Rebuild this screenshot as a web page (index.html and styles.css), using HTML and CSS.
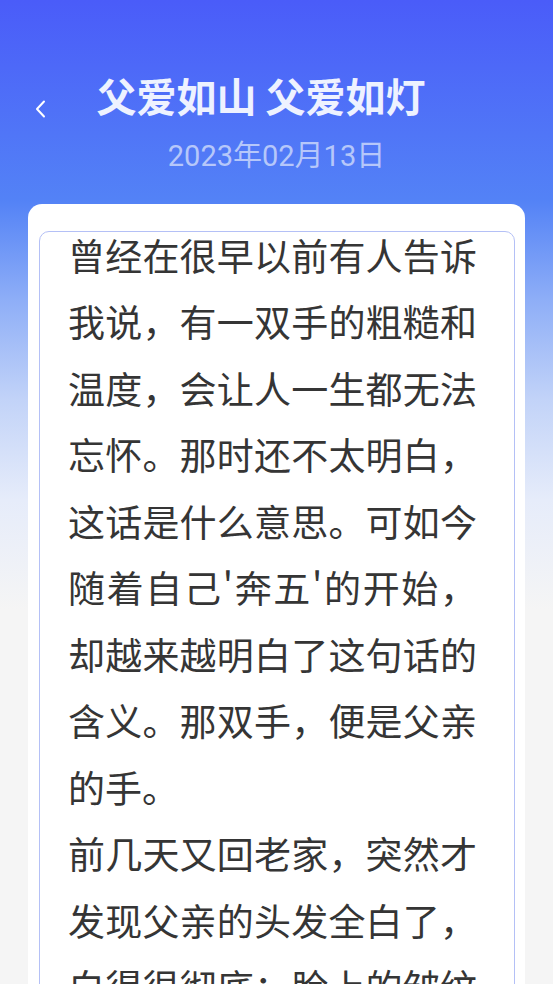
FILE: index.html
```html
<!DOCTYPE html>
<html lang="zh-CN">
<head>
<meta charset="utf-8">
<meta name="viewport" content="width=553">
<title>父爱如山 父爱如灯</title>
<link rel="stylesheet" href="styles.css">
</head>
<body>
<div class="page">
  <header class="top">
    <button class="back" aria-label="返回">
      <svg width="12" height="18" viewBox="0 0 12 18"><path d="M10 1.5 L3 9 L10 16.5" fill="none" stroke="#ffffff" stroke-width="2" stroke-linecap="round" stroke-linejoin="round"/></svg>
    </button>
    <h1 class="title">父爱如山 父爱如灯</h1>
    <div class="date">2023年02月13日</div>
  </header>
  <main class="card">
    <div class="content">
      <div class="text">
        <p>曾经在很早以前有人告诉我说，有一双手的粗糙和温度，会让人一生都无法忘怀。那时还不太明白，这话是什么意思。可如今随着自己'奔五'的开始，却越来越明白了这句话的含义。那双手，便是父亲的手。</p>
        <p>前几天又回老家，突然才发现父亲的头发全白了，白得很彻底；脸上的皱纹也更深了。</p>
      </div>
    </div>
  </main>
</div>
</body>
</html>
```

FILE: styles.css
```css
html, body {
  margin: 0;
  padding: 0;
}
body {
  background: #f5f5f5;
  font-family: "Noto Sans CJK SC", "Noto Sans", sans-serif;
}
.page {
  height: 984px;
  overflow: hidden;
  background: linear-gradient(180deg, #4a5cf9 0px, #5382f6 200px, #8eaef7 300px, #c2d3f8 400px, #e6ecfa 500px, #f5f5f5 610px, #f5f5f5 100%);
}
.top {
  display: grid;
  grid-template-columns: 62px 1fr 93px;
  grid-template-rows: auto auto;
  padding-top: 70px;
}
.back {
  grid-column: 1;
  grid-row: 1;
  align-self: end;
  justify-self: start;
  margin: 0 0 1px 33px;
  padding: 0;
  border: 0;
  background: none;
  display: flex;
  width: 14px;
  height: 20px;
  align-items: center;
  justify-content: center;
}
.title {
  grid-column: 2;
  grid-row: 1;
  margin: 0;
  text-align: center;
  font-size: 40px;
  line-height: 50px;
  font-weight: 700;
  color: #eef2ff;
  white-space: nowrap;
}
.date {
  grid-column: 1 / 4;
  grid-row: 2;
  margin-top: 19px;
  text-align: center;
  font-family: Roboto, "Noto Sans CJK SC", sans-serif;
  font-size: 29px;
  line-height: 34px;
  color: #b6c7fa;
}
.card {
  display: block;
  margin: 31px 28px 0 28px;
  padding: 27px 10px 0 11px;
  background: #ffffff;
  border-radius: 14px 14px 0 0;
  height: 760px;
}
.content {
  border: 1px solid #b4c0f6;
  border-radius: 10px;
  padding: 0 37px 0 28px;
  height: 900px;
  overflow: hidden;
}
.text {
  margin-top: -10px;
}
.text p {
  margin: 0;
  font-size: 37px;
  line-height: 66.45px;
  color: #353535;
  text-align: justify;
}
```
